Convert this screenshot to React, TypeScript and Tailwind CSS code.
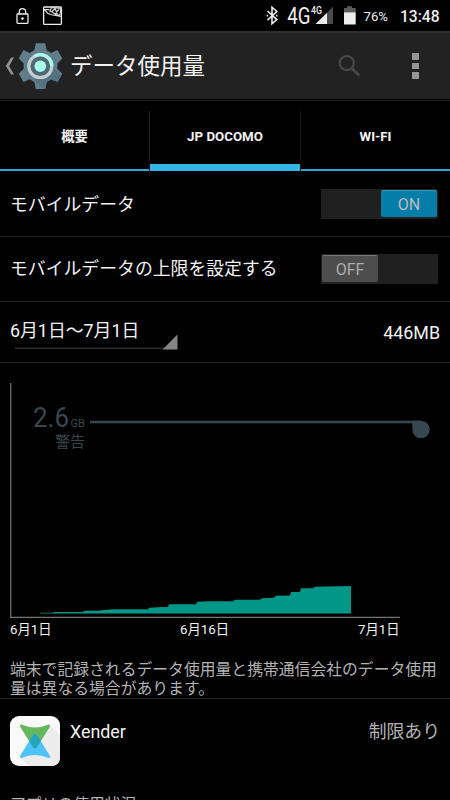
import React from "react";

const usagePoints =
  "40,613.5 40,612.8 52,612.8 54,612 83,612 84,610.8 98,610.8 113,609.3 148,609.3 149,607.8 162,607 168,607 169,604.3 196,604.3 197,601.7 208,601.2 233,601.2 235,599.8 260,599.8 262,598.3 274,597.8 276,595.8 290,595.5 291,592 300,592 301,588.2 313,588.2 315,586.7 351,586 351,613.5";

function StatusBar() {
  return (
    <div className="flex h-[31px] bg-black">
      <svg width="450" height="31" viewBox="0 0 450 31" fill="none">
        {/* Lock */}
        <rect x="17" y="14" width="11" height="9.4" rx="0.8" stroke="#eee" strokeWidth="1.3" />
        <path d="M19.3 14v-2.2a3.2 3.2 0 0 1 6.4 0V14" stroke="#eee" strokeWidth="1.3" />
        <circle cx="22.5" cy="18.6" r="1.3" fill="#eee" />
        {/* Picture */}
        <rect x="43.6" y="7" width="17.8" height="17.4" rx="1" stroke="#eee" strokeWidth="1.3" />
        <path d="M44 9.6h5.5M44.5 9.8q3 4 7 5l9.5 1.7M50 11.3l1.5-3.8 9.5 1-1.2 6.8-3.6-.6-5-3.2z" stroke="#ddd" strokeWidth="1.1" />
        <path d="m52 11.5 3-3 1.5 3.5 2.7-2.6M54 13.4l4 .6" stroke="#ddd" strokeWidth="1.3" />
        {/* Bluetooth */}
        <path d="m267.5 11 9.3 8.6-4.8 4.2V7.2l4.8 4.3-9.3 8.7" stroke="#eee" strokeWidth="1.6" />
        <path d="M266.7 15.6h1.5M276 15.6h1.5" stroke="#eee" strokeWidth="1.6" />
        <text x="287.2" y="24" fill="#eee" fontFamily="Roboto, sans-serif" fontSize="23" textLength="23.3" lengthAdjust="spacingAndGlyphs">4G</text>
        <text x="311" y="14" fill="#eee" fontFamily="Roboto, sans-serif" fontSize="10" fontWeight="500" textLength="11" lengthAdjust="spacingAndGlyphs">4G</text>
        {/* Signal */}
        <path d="M327 12.7 333 6.5V24h-6z" fill="#4a4a4a" />
        <path d="M315.5 24 327 12.7V24z" fill="#eee" />
        {/* Battery */}
        <path d="M344 8h3V6.3h5V8h3.7v4.5H344z" fill="#5b5b5b" />
        <path d="M344 12.3h11.7v12.2H344z" fill="#eee" />
        <text x="363.5" y="20.7" fill="#eee" fontFamily="Roboto, sans-serif" fontSize="12.6" textLength="24.5" lengthAdjust="spacingAndGlyphs">76%</text>
        <text x="400" y="22" fill="#eee" fontFamily="Roboto, sans-serif" fontSize="16" fontWeight="500" textLength="39.5" lengthAdjust="spacingAndGlyphs">13:48</text>
      </svg>
    </div>
  );
}

function SettingsIcon() {
  return (
    <svg className="shrink-0" width="45" height="48" viewBox="18 42 45 48" fill="none">
      <path
        d="M35.8 43.3h9.4l1.5 7 4.6 2.6 6.2-2.8 4.8 8.4-5 4.9v5.4l5 4.9-4.8 8.4-6.2-2.8-4.6 2.6-1.5 7h-9.4l-1.5-7-4.6-2.6-6.2 2.8-4.8-8.4 5-4.9v-5.4l-5-4.9 4.8-8.4 6.2 2.8 4.6-2.6z"
        fill="#607d8b"
      />
      <path d="m31 76 12.4 12.9h1.8l1.5-7 4.6-2.6 6.2 2.8 3.5-6.2L50 63z" fill="#56717e" />
      <circle cx="40.3" cy="66.4" r="13.4" fill="#4f6874" />
      <circle cx="40.3" cy="66.2" r="11.5" stroke="#c3ced3" strokeWidth="3.3" />
      <path d="M34.6 56.2A11.5 11.5 0 0 1 51.8 66.2" stroke="#a7ffeb" strokeWidth="3.3" />
      <circle cx="40.3" cy="66.2" r="5.8" fill="#a7ffeb" />
    </svg>
  );
}

function Header() {
  return (
    <div className="flex h-[69px] items-center border-t-2 border-b border-t-[#303030] border-b-black bg-[#222]">
      <svg className="ml-[5px] shrink-0" width="13" height="20" viewBox="0 0 13 20" fill="none">
        <path d="M6.1 1.5H9L4.1 10 9 18.5H6.1L.8 10z" fill="#929292" />
      </svg>
      <SettingsIcon />
      <h1 className="ml-[7px] w-[134px] whitespace-nowrap text-[22.5px] leading-8 text-[#f3f3f3]">データ使用量</h1>
      <svg className="ml-[133px]" width="24" height="24" viewBox="337 54 24 24" fill="none">
        <circle cx="346.8" cy="63" r="7" stroke="#484848" strokeWidth="2.2" />
        <path d="m351.8 68.3 7.5 7.2" stroke="#484848" strokeWidth="3" />
      </svg>
      <div className="ml-[51px] flex flex-col gap-[3px]">
        <span className="size-[6.5px] bg-[#969696]" />
        <span className="size-[6.5px] bg-[#969696]" />
        <span className="size-[6.5px] bg-[#969696]" />
      </div>
    </div>
  );
}

function Tabs() {
  return (
    <div className="flex h-[71px] border-t border-[#202020] text-[13.3px] font-bold text-[#f3f3f3]">
      <div className="flex w-[149px] items-center justify-center border-b-2 border-[#2ba8d8] pt-[4px]">概要</div>
      <div className="mt-[10px] h-[50px] w-px bg-[#242424]" />
      <div className="flex w-[150px] items-center justify-center border-b-[7px] border-[#33b5e5] pt-[8px]">JP DOCOMO</div>
      <div className="mt-[10px] h-[50px] w-px bg-[#1b1b1b]" />
      <div className="flex w-[149px] items-center justify-center border-b-2 border-[#2ba8d8] pt-[3px]">WI-FI</div>
    </div>
  );
}

function Switch({ on }: { on: boolean }) {
  return (
    <div className={`flex h-[30px] w-[117px] bg-[#202020] p-[1px] ${on ? "justify-end" : "justify-start"}`}>
      <span
        className={`flex h-[27px] w-[56px] items-center justify-center rounded-[2px] border-t pt-[2px] text-base ${
          on ? "border-[#3d99bd] bg-[#047da9] text-[#bcbcbc]" : "border-[#777] bg-[#4d4d4d] text-[#adadad]"
        }`}
      >
        {on ? "ON" : "OFF"}
      </span>
    </div>
  );
}

function Chart() {
  return (
    <svg className="block" width="450" height="290" viewBox="0 363 450 290" fill="none">
      <path d="M10.7 383v234.3H400" stroke="#757575" strokeWidth="1.2" />
      <text x="33" y="427" fill="#37474f" fontSize="27" textLength="36" lengthAdjust="spacingAndGlyphs">2.6</text>
      <text x="70.5" y="427" fill="#37474f" fontSize="11" textLength="14.5" lengthAdjust="spacingAndGlyphs">GB</text>
      <text x="55" y="446.5" fill="#37474f" fontSize="15">警告</text>
      <path d="M90 422H421" stroke="#37474f" strokeWidth="2.6" />
      <path d="M412.3 420.8h8.7a8.7 8.7 0 1 1-8.7 8.7z" fill="#37474f" />
      <polygon points={usagePoints} fill="#009688" />
      <g fill="#f3f3f3" fontSize="13.3">
        <text x="10" y="634">6月1日</text>
        <text x="180" y="634">6月16日</text>
        <text x="358" y="634">7月1日</text>
      </g>
    </svg>
  );
}

function XenderIcon() {
  return (
    <svg className="shrink-0" width="50" height="50" viewBox="0 0 50 50">
      <rect width="50" height="50" rx="9" fill="#fafafa" />
      <path d="m40 9 10 10v22q0 9-9 9H19l-8.5-8z" fill="#ececec" />
      <path d="M11.5 8.4q13.5 6 27 0 2.2-.2 1.5 2L27 31.3q-2 2.4-4 0L10 10.4q-.7-2.2 1.5-2z" fill="#66b75c" />
      <path d="M11.5 42q13.5-6 27 0 2.2.2 1.5-2L27 19q-2-2.4-4 0L10 40q-.7 2.2 1.5 2z" fill="#4fc3f7" />
      <path d="m27 19 3.9 6.2-3.9 6.1q-2 2.4-4 0l-3.9-6.1L23 19q2-2.4 4 0z" fill="#22a6bd" />
    </svg>
  );
}

export default function App() {
  return (
    <div className="h-[800px] w-[450px] overflow-hidden bg-black font-['Roboto','Noto_Sans_CJK_JP',sans-serif] text-[#f3f3f3]">
      <StatusBar />
      <Header />
      <Tabs />

      {/* Data switches */}
      <div className="flex h-[66px] items-center justify-between border-b border-[#202020] pr-3 pl-[10px] text-[17.85px]">
        <span className="pt-[3px]">モバイルデータ</span>
        <Switch on />
      </div>
      <div className="flex h-[65px] items-center justify-between border-b border-[#202020] pr-3 pl-[10px] text-[17.85px]">
        <span className="pt-px">モバイルデータの上限を設定する</span>
        <Switch on={false} />
      </div>

      {/* Billing cycle */}
      <div className="flex h-[61px] items-center justify-between border-b border-[#202020] pr-[10px] pl-[10px] text-[17.85px]">
        <div className="flex h-[37px] w-[168px] flex-col">
          <span className="h-[21px] whitespace-nowrap leading-[34px]">6月1日〜7月1日</span>
          <svg className="ml-[5px]" width="163" height="16" viewBox="0 0 163 16">
            <path d="M0 12.5h149V14H0z" fill="#292929" />
            <path d="M147.5 14.5h15V-.5z" fill="#848484" />
          </svg>
        </div>
        <span className="pt-[3px]">446MB</span>
      </div>

      <Chart />

      <div className="h-[46px] border-b border-[#202020] pt-[8px] pl-[10px] text-[15.82px] leading-[18.5px] text-[#b3b3b3]">
        <p className="whitespace-nowrap">端末で記録されるデータ使用量と携帯通信会社のデータ使用</p>
        <p>量は異なる場合があります。</p>
      </div>

      {/* App usage */}
      <div className="flex h-[94px] pt-[17px] pr-[10px] pl-[10px] text-[17.85px]">
        <XenderIcon />
        <span className="ml-[10px] pt-[3px]">Xender</span>
        <span className="ml-auto pt-[3px] text-[#b3b3b3]">制限あり</span>
      </div>
      <p className="pl-[10px] text-[15.8px] leading-6 text-[#b3b3b3]">アプリの使用状況</p>
    </div>
  );
}
